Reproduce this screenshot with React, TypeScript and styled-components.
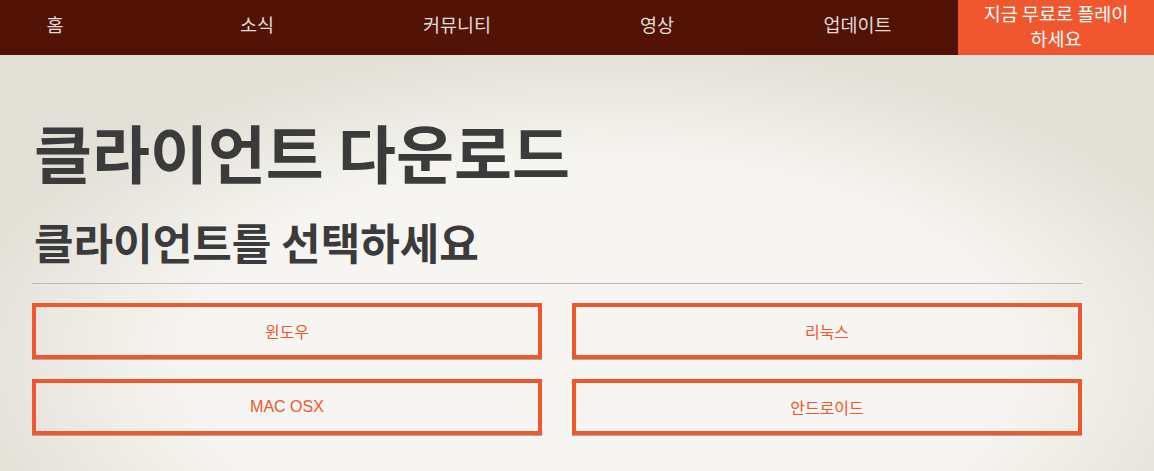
import styled, { createGlobalStyle } from "styled-components"

const GlobalStyle = createGlobalStyle`
  html, body {
    margin: 0;
    padding: 0;
  }

  body {
    min-height: 100vh;
    font-family: "Noto Sans CJK KR", "Liberation Sans", sans-serif;
    background-color: #e2dfd6;
    background-image: radial-gradient(ellipse 660px 320px at 52% 360px, #f6f5f1 62%, #e2dfd6 100%);
    background-repeat: no-repeat;
  }
`

const navItems = ["홈", "소식", "커뮤니티", "영상", "업데이트"]
const clients = ["윈도우", "리눅스", "MAC OSX", "안드로이드"]

const App = () => {
  return (
    <>
      <GlobalStyle />
      <TopNav>
        {navItems.map((item) => (
          <NavLink key={item}>{item}</NavLink>
        ))}
        <PlayButton>지금 무료로 플레이하세요</PlayButton>
      </TopNav>
      <Main>
        <Title>클라이언트 다운로드</Title>
        <SubTitle>클라이언트를 선택하세요</SubTitle>
        <Divider />
        <ClientGrid>
          {clients.map((name) => (
            <ClientButton key={name}>{name}</ClientButton>
          ))}
        </ClientGrid>
      </Main>
    </>
  )
}

const TopNav = styled.nav`
  height: 55px;
  background: #521306;

  display: grid;
  grid-template-columns: 157px repeat(3, 200px) 201px 1fr;
`

const NavLink = styled.a`
  padding-top: 12px;
  text-align: center;

  font-size: 18.5px;
  line-height: 25px;
  color: #e2dbd6;
  cursor: pointer;

  &:first-child {
    padding-right: 47px;
  }
`

const PlayButton = styled.a`
  padding: 1px 20px 0;
  background: #f0572f;

  text-align: center;
  font-size: 18.5px;
  line-height: 25px;
  color: #fff;
  cursor: pointer;
`

const Main = styled.main`
  width: 1050px;
  margin: 0 0 0 32px;
  padding-top: 64px;
`

const Title = styled.h1`
  margin: 0 0 0 2px;
  font-size: 63px;
  line-height: 1;
  font-weight: 700;
  color: #3b3b3b;
`

const SubTitle = styled.h2`
  margin: 38px 0 0 2px;
  font-size: 43px;
  line-height: 1;
  font-weight: 700;
  color: #3b3b3b;
`

const Divider = styled.hr`
  margin: 20px 0 0;
  border: none;
  border-top: 1px solid #bcbab4;
`

const ClientGrid = styled.div`
  margin-top: 19px;

  display: grid;
  grid-template-columns: repeat(2, 510px);
  column-gap: 30px;
  row-gap: 20px;
`

const ClientButton = styled.button`
  height: 56px;
  border: 4px solid #f0572f;
  background: transparent;
  box-shadow: 0 1px 0 #aaa9a5;

  font-family: "Liberation Sans", "Noto Sans CJK KR", sans-serif;
  font-size: 16px;
  color: #f0572f;
  cursor: pointer;
`

export default App
